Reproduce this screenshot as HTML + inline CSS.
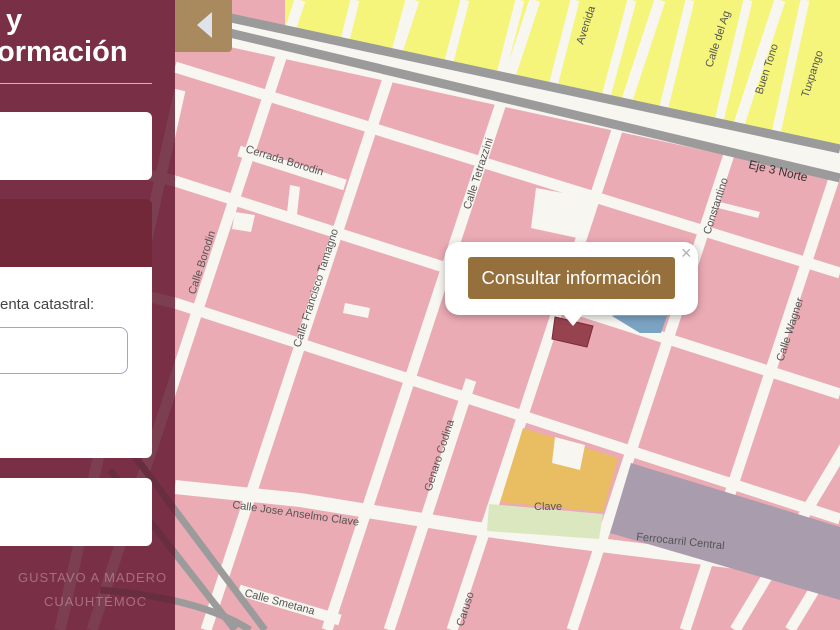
<!DOCTYPE html>
<html><head><meta charset="utf-8"><style>
html,body{margin:0;padding:0;width:840px;height:630px;overflow:hidden;font-family:"Liberation Sans",sans-serif;}
#map{position:absolute;left:0;top:0;}
.side{position:absolute;left:0;top:0;width:175px;height:630px;background:rgba(92,18,42,0.8);}
.t{position:absolute;color:#fff;font-weight:bold;font-size:29px;}
.box{position:absolute;left:0;width:152px;background:#fff;border-radius:0 6px 6px 0;}
.tog{position:absolute;left:175px;top:0;width:57px;height:52px;background:#a88a5e;border-radius:0 0 4px 0;}
.pop{position:absolute;left:445px;top:242px;width:253px;height:73px;background:#fff;border-radius:14px;box-shadow:0 2px 8px rgba(0,0,0,0.3);}
.btn{position:absolute;left:23px;top:15px;width:207px;height:42px;background:#96703c;border-radius:3px;color:#fff;font-size:18.5px;line-height:42px;text-align:center;}
</style></head><body>
<svg id="map" width="840" height="630" viewBox="0 0 840 630">
<rect width="840" height="630" fill="#eaabb4"/>
<polygon points="285,0 840,0 840,150 285,30" fill="#f4f57a"/>
<g stroke="#f7f6f1" stroke-width="9" fill="none">
<line x1="355" y1="0" x2="345" y2="40"/><line x1="410" y1="0" x2="395" y2="55"/><line x1="465" y1="0" x2="448" y2="65"/>
<line x1="520" y1="0" x2="500" y2="78"/><line x1="575" y1="0" x2="552" y2="90"/><line x1="632" y1="0" x2="605" y2="100"/>
<line x1="690" y1="0" x2="662" y2="115"/><line x1="748" y1="0" x2="718" y2="125"/><line x1="805" y1="0" x2="775" y2="138"/>
</g>
<g stroke="#f7f6f1" stroke-width="11" fill="none">
<line x1="175" y1="67" x2="840" y2="273"/>
<line x1="175" y1="181" x2="840" y2="394"/>
<line x1="175" y1="303" x2="840" y2="519"/>
<line x1="239" y1="151" x2="345" y2="185"/>
<line x1="239" y1="590" x2="340" y2="620"/>
<line x1="0" y1="140" x2="175" y2="181"/>
<line x1="0" y1="260" x2="175" y2="303"/>
<line x1="300" y1="0" x2="92" y2="630"/>
<line x1="414" y1="0" x2="206" y2="630"/>
<line x1="535" y1="0" x2="327" y2="630"/>
<line x1="471" y1="380" x2="389" y2="630"/>
<line x1="660" y1="0" x2="452" y2="630"/>
<line x1="780" y1="0" x2="572" y2="630"/>
<line x1="893" y1="0" x2="685" y2="630"/>
<line x1="933" y1="300" x2="735" y2="630"/>
<line x1="990" y1="300" x2="790" y2="630"/>
<line x1="180" y1="90" x2="60" y2="630"/>
</g>
<g stroke="#f7f6f1" stroke-width="14" fill="none">
<polyline points="175,487 300,500 472,528 560,540 840,575"/>
</g>
<polygon points="175,8 840,150 840,180 175,35" fill="#f7f6f1"/>
<g stroke="#9b9b9b" stroke-width="9" fill="none">
<line x1="175" y1="6" x2="840" y2="149"/>
<line x1="175" y1="20" x2="840" y2="178"/>
</g>
<polygon points="536,188 591,198 582,239 531,228" fill="#f7f6f1"/>
<polygon points="290,185 300,187 297,215 287,213" fill="#f7f6f1"/>
<polygon points="235,212 255,215 251,232 232,229" fill="#f7f6f1"/>
<polygon points="345,303 370,308 368,318 343,313" fill="#f7f6f1"/>
<polygon points="720,202 760,212 758,218 718,208" fill="#f7f6f1"/>
<polygon points="523,428 618,458 603,512 500,502" fill="#e9bd62"/>
<polygon points="555,437 585,445 580,470 552,463" fill="#f7f6f1"/>
<polygon points="489,504 603,514 599,539 487,531" fill="#dbe8bf"/>
<polygon points="631,463 840,527 840,600 610,533" fill="#a99cad"/>
<polygon points="612,316 667,316 661,333 640,333" fill="#7ba3c2"/>
<polygon points="555,317 593,326 587,347 552,339" fill="#96424f" stroke="#7a2a38"/>
<g stroke="#9b9b9b" stroke-width="7" fill="none">
<line x1="130" y1="450" x2="265" y2="630"/>
<line x1="110" y1="470" x2="235" y2="630"/>
<path d="M100,590 Q200,598 250,630"/>
</g>
<g font-family="Liberation Sans" font-size="11" fill="#555">
<text x="748" y="168" transform="rotate(13 748 168)" font-size="12" fill="#333">Eje 3 Norte</text>
<text x="470" y="210" transform="rotate(-72 470 210)">Calle Tetrazzini</text>
<text x="300" y="348" transform="rotate(-72 300 348)">Calle Francisco Tamagno</text>
<text x="195" y="295" transform="rotate(-72 195 295)">Calle Borodin</text>
<text x="245" y="152" transform="rotate(17 245 152)">Cerrada Borodin</text>
<text x="431" y="492" transform="rotate(-72 431 492)">Genaro Codina</text>
<text x="463" y="627" transform="rotate(-72 463 627)">Caruso</text>
<text x="783" y="362" transform="rotate(-72 783 362)">Calle Wagner</text>
<text x="232" y="508" transform="rotate(8 232 508)">Calle Jose Anselmo Clave</text>
<text x="534" y="510">Clave</text>
<text x="636" y="540" transform="rotate(6 636 540)">Ferrocarril Central</text>
<text x="244" y="596" transform="rotate(15 244 596)">Calle  Smetana</text>
<text x="710" y="235" transform="rotate(-72 710 235)">Constantino</text>
<text x="583" y="45" transform="rotate(-72 583 45)">Avenida</text>
<text x="712" y="68" transform="rotate(-72 712 68)">Calle del Ag</text>
<text x="762" y="95" transform="rotate(-72 762 95)">Buen Tono</text>
<text x="808" y="98" transform="rotate(-72 808 98)">Tuxpango</text>
</g>
</svg>
<div class="side"></div>
<div class="t" style="left:6px;top:4px;">y</div>
<div class="t" style="left:-3px;top:36px;">ormación</div>
<div style="position:absolute;left:0;top:83px;width:152px;height:1px;background:#c9b9be;"></div>
<div class="box" style="top:112px;height:68px;"></div>
<div style="position:absolute;left:0;top:199px;width:152px;height:68px;background:#73283a;border-radius:0 6px 0 0;"></div>
<div class="box" style="top:267px;height:191px;border-radius:0 0 6px 0;">
<div style="position:absolute;left:0;top:29px;font-size:15px;color:#444;">enta catastral:</div>
<div style="position:absolute;left:-20px;top:60px;width:146px;height:45px;border:1.5px solid #9aaabf;border-radius:8px;"></div>
</div>
<div class="box" style="top:478px;height:68px;"></div>
<div style="position:absolute;left:18px;top:570px;font-size:13px;color:rgba(200,150,165,0.6);letter-spacing:1px;">GUSTAVO A MADERO</div>
<div style="position:absolute;left:44px;top:594px;font-size:13px;color:rgba(200,150,165,0.6);letter-spacing:1px;">CUAUHTÉMOC</div>
<div class="tog"><svg width="57" height="52"><polygon points="22,25 37,12 37,38" fill="#dfe4ec"/></svg></div>
<div class="pop">
<div class="btn">Consultar información</div>
<div style="position:absolute;left:236px;top:1px;font-size:18px;color:#b0b0b0;">×</div>
</div>
<div style="position:absolute;left:563px;top:314px;width:0;height:0;border-left:10px solid transparent;border-right:10px solid transparent;border-top:12px solid #fff;"></div>
</body></html>
